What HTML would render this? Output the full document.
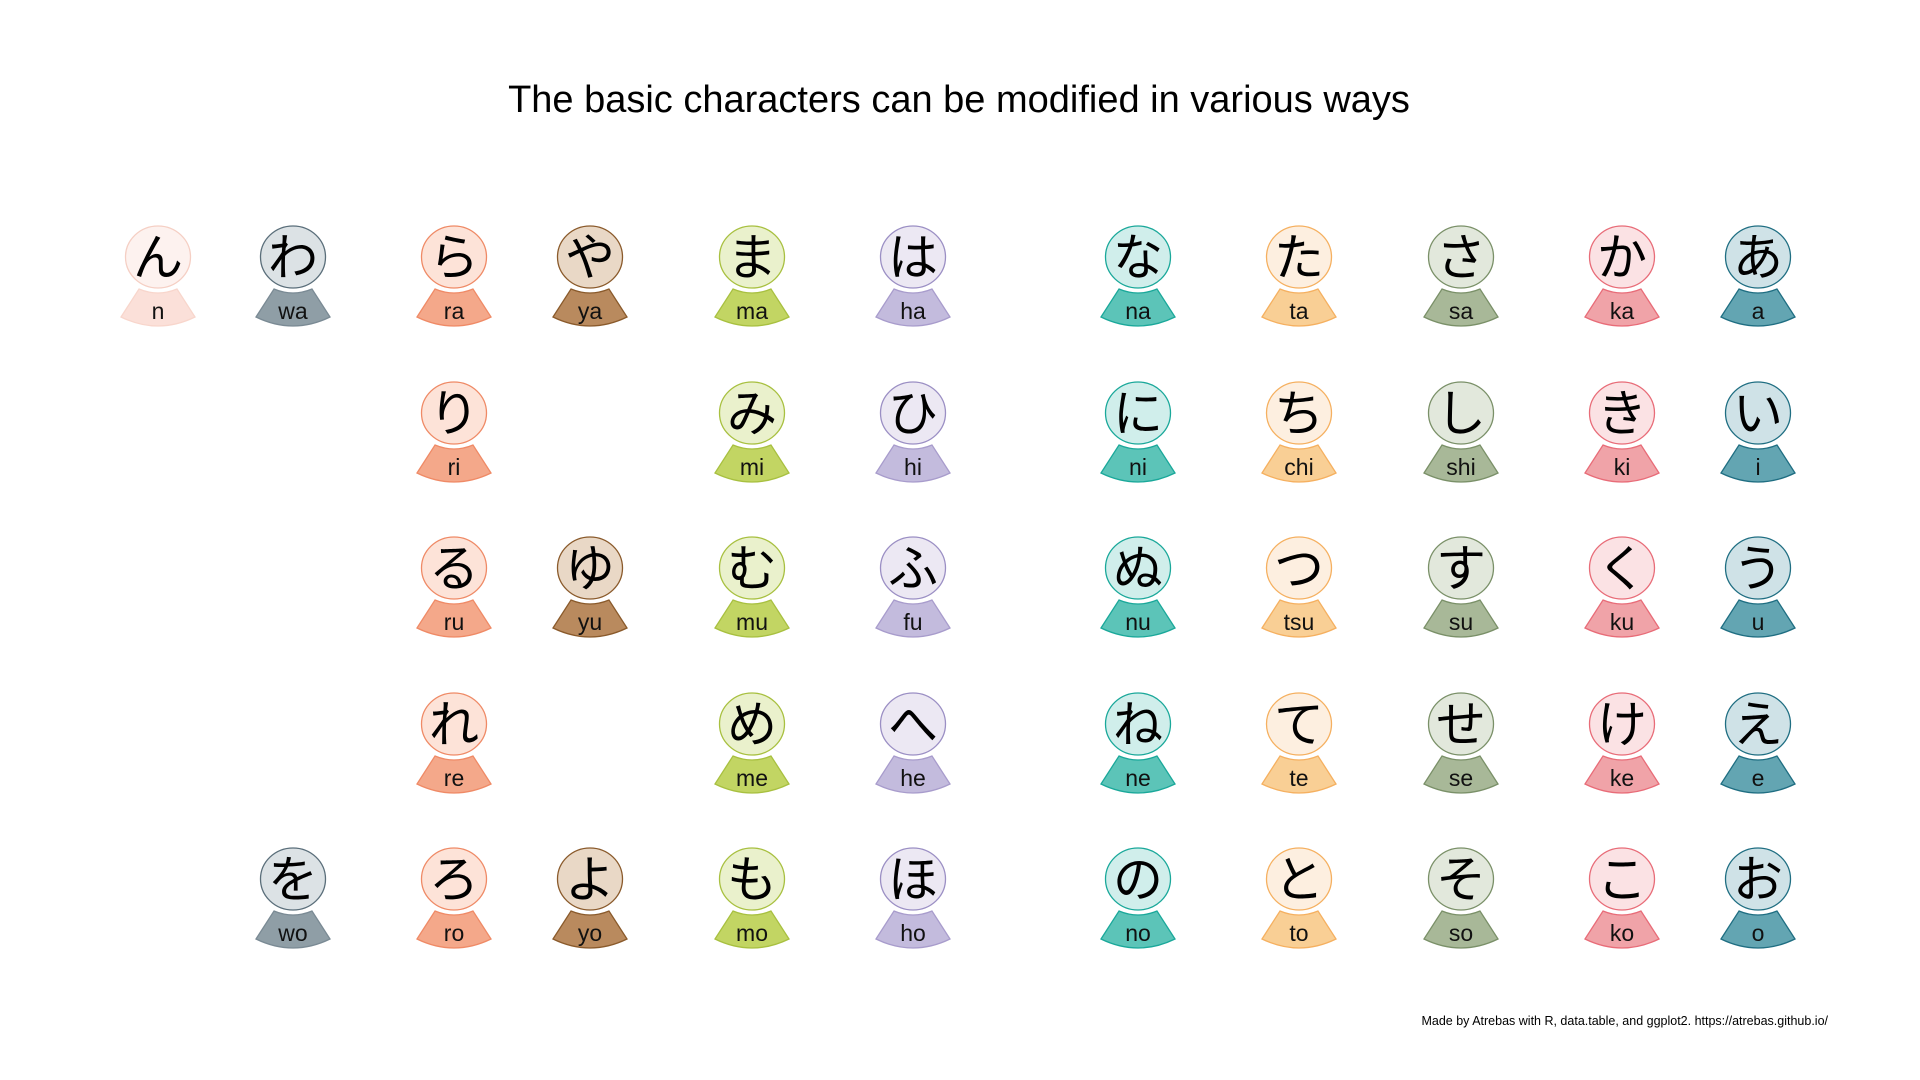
<!DOCTYPE html>
<html><head><meta charset="utf-8"><style>
html,body{margin:0;padding:0;background:#fff;}
svg{display:block}
.k{font-family:"Noto Sans CJK JP","WenQuanYi Zen Hei",sans-serif;font-size:50px;text-anchor:middle;fill:#000}
.l{font-family:"Liberation Sans",sans-serif;font-size:23px;text-anchor:middle;fill:#111}
.c0{--f:#fdf2ef;--s:#f5cfc4;--bf:#fbe0d9;--bs:#f8d6cc}
.c1{--f:#dce2e5;--s:#5a6e7a;--bf:#8f9ea6;--bs:#7a8a94}
.c2{--f:#fde3d8;--s:#ef8a66;--bf:#f4a88a;--bs:#ef8a66}
.c3{--f:#e9d8c6;--s:#8a5a2b;--bf:#b98a5e;--bs:#8a5a2b}
.c4{--f:#eaf1cc;--s:#a8c040;--bf:#c2d563;--bs:#a8c040}
.c5{--f:#ece8f3;--s:#9b8fc4;--bf:#c3bbdd;--bs:#a89ccc}
.c6{--f:#d0eeeb;--s:#1aa89a;--bf:#5cc4b8;--bs:#1aa89a}
.c7{--f:#fdefe0;--s:#f5b060;--bf:#f9cf95;--bs:#f5b060}
.c8{--f:#e2e8dc;--s:#7a9068;--bf:#a8b898;--bs:#7a9068}
.c9{--f:#fbe2e4;--s:#e86c78;--bf:#f0a3a8;--bs:#e86c78}
.c10{--f:#cfe2e7;--s:#1f6e82;--bf:#63a5b2;--bs:#1f6e82}
</style></head><body>
<svg width="1920" height="1080" viewBox="0 0 1920 1080" xmlns="http://www.w3.org/2000/svg">
<defs>
<g id="b"><ellipse cx="0" cy="0" rx="32.5" ry="31" style="fill:var(--f);stroke:var(--s);stroke-width:1.3"/><path d="M-19 32 Q0 40 19 32 L37 60 Q0 78 -37 60 Z" style="fill:var(--bf);stroke:var(--bs);stroke-width:1.3"/></g>
</defs>
<text x="959" y="112" style="font-family:'Liberation Sans',sans-serif;font-size:38px;text-anchor:middle;fill:#000">The basic characters can be modified in various ways</text>
<text x="1828" y="1025" style="font-family:'Liberation Sans',sans-serif;font-size:12.5px;text-anchor:end;fill:#000">Made by Atrebas with R, data.table, and ggplot2. https://atrebas.github.io/</text>

<g class="c0" transform="translate(158,257)"><use href="#b"/><text class="k" y="18">ん</text><text class="l" y="62">n</text></g>

<g class="c1" transform="translate(293,257)"><use href="#b"/><text class="k" y="18">わ</text><text class="l" y="62">wa</text></g>
<g class="c1" transform="translate(293,879)"><use href="#b"/><text class="k" y="18">を</text><text class="l" y="62">wo</text></g>

<g class="c2" transform="translate(454,257)"><use href="#b"/><text class="k" y="18">ら</text><text class="l" y="62">ra</text></g>
<g class="c2" transform="translate(454,413)"><use href="#b"/><text class="k" y="18">り</text><text class="l" y="62">ri</text></g>
<g class="c2" transform="translate(454,568)"><use href="#b"/><text class="k" y="18">る</text><text class="l" y="62">ru</text></g>
<g class="c2" transform="translate(454,724)"><use href="#b"/><text class="k" y="18">れ</text><text class="l" y="62">re</text></g>
<g class="c2" transform="translate(454,879)"><use href="#b"/><text class="k" y="18">ろ</text><text class="l" y="62">ro</text></g>

<g class="c3" transform="translate(590,257)"><use href="#b"/><text class="k" y="18">や</text><text class="l" y="62">ya</text></g>
<g class="c3" transform="translate(590,568)"><use href="#b"/><text class="k" y="18">ゆ</text><text class="l" y="62">yu</text></g>
<g class="c3" transform="translate(590,879)"><use href="#b"/><text class="k" y="18">よ</text><text class="l" y="62">yo</text></g>

<g class="c4" transform="translate(752,257)"><use href="#b"/><text class="k" y="18">ま</text><text class="l" y="62">ma</text></g>
<g class="c4" transform="translate(752,413)"><use href="#b"/><text class="k" y="18">み</text><text class="l" y="62">mi</text></g>
<g class="c4" transform="translate(752,568)"><use href="#b"/><text class="k" y="18">む</text><text class="l" y="62">mu</text></g>
<g class="c4" transform="translate(752,724)"><use href="#b"/><text class="k" y="18">め</text><text class="l" y="62">me</text></g>
<g class="c4" transform="translate(752,879)"><use href="#b"/><text class="k" y="18">も</text><text class="l" y="62">mo</text></g>

<g class="c5" transform="translate(913,257)"><use href="#b"/><text class="k" y="18">は</text><text class="l" y="62">ha</text></g>
<g class="c5" transform="translate(913,413)"><use href="#b"/><text class="k" y="18">ひ</text><text class="l" y="62">hi</text></g>
<g class="c5" transform="translate(913,568)"><use href="#b"/><text class="k" y="18">ふ</text><text class="l" y="62">fu</text></g>
<g class="c5" transform="translate(913,724)"><use href="#b"/><text class="k" y="18">へ</text><text class="l" y="62">he</text></g>
<g class="c5" transform="translate(913,879)"><use href="#b"/><text class="k" y="18">ほ</text><text class="l" y="62">ho</text></g>

<g class="c6" transform="translate(1138,257)"><use href="#b"/><text class="k" y="18">な</text><text class="l" y="62">na</text></g>
<g class="c6" transform="translate(1138,413)"><use href="#b"/><text class="k" y="18">に</text><text class="l" y="62">ni</text></g>
<g class="c6" transform="translate(1138,568)"><use href="#b"/><text class="k" y="18">ぬ</text><text class="l" y="62">nu</text></g>
<g class="c6" transform="translate(1138,724)"><use href="#b"/><text class="k" y="18">ね</text><text class="l" y="62">ne</text></g>
<g class="c6" transform="translate(1138,879)"><use href="#b"/><text class="k" y="18">の</text><text class="l" y="62">no</text></g>

<g class="c7" transform="translate(1299,257)"><use href="#b"/><text class="k" y="18">た</text><text class="l" y="62">ta</text></g>
<g class="c7" transform="translate(1299,413)"><use href="#b"/><text class="k" y="18">ち</text><text class="l" y="62">chi</text></g>
<g class="c7" transform="translate(1299,568)"><use href="#b"/><text class="k" y="18">つ</text><text class="l" y="62">tsu</text></g>
<g class="c7" transform="translate(1299,724)"><use href="#b"/><text class="k" y="18">て</text><text class="l" y="62">te</text></g>
<g class="c7" transform="translate(1299,879)"><use href="#b"/><text class="k" y="18">と</text><text class="l" y="62">to</text></g>

<g class="c8" transform="translate(1461,257)"><use href="#b"/><text class="k" y="18">さ</text><text class="l" y="62">sa</text></g>
<g class="c8" transform="translate(1461,413)"><use href="#b"/><text class="k" y="18">し</text><text class="l" y="62">shi</text></g>
<g class="c8" transform="translate(1461,568)"><use href="#b"/><text class="k" y="18">す</text><text class="l" y="62">su</text></g>
<g class="c8" transform="translate(1461,724)"><use href="#b"/><text class="k" y="18">せ</text><text class="l" y="62">se</text></g>
<g class="c8" transform="translate(1461,879)"><use href="#b"/><text class="k" y="18">そ</text><text class="l" y="62">so</text></g>

<g class="c9" transform="translate(1622,257)"><use href="#b"/><text class="k" y="18">か</text><text class="l" y="62">ka</text></g>
<g class="c9" transform="translate(1622,413)"><use href="#b"/><text class="k" y="18">き</text><text class="l" y="62">ki</text></g>
<g class="c9" transform="translate(1622,568)"><use href="#b"/><text class="k" y="18">く</text><text class="l" y="62">ku</text></g>
<g class="c9" transform="translate(1622,724)"><use href="#b"/><text class="k" y="18">け</text><text class="l" y="62">ke</text></g>
<g class="c9" transform="translate(1622,879)"><use href="#b"/><text class="k" y="18">こ</text><text class="l" y="62">ko</text></g>

<g class="c10" transform="translate(1758,257)"><use href="#b"/><text class="k" y="18">あ</text><text class="l" y="62">a</text></g>
<g class="c10" transform="translate(1758,413)"><use href="#b"/><text class="k" y="18">い</text><text class="l" y="62">i</text></g>
<g class="c10" transform="translate(1758,568)"><use href="#b"/><text class="k" y="18">う</text><text class="l" y="62">u</text></g>
<g class="c10" transform="translate(1758,724)"><use href="#b"/><text class="k" y="18">え</text><text class="l" y="62">e</text></g>
<g class="c10" transform="translate(1758,879)"><use href="#b"/><text class="k" y="18">お</text><text class="l" y="62">o</text></g>
</svg>
</body></html>
